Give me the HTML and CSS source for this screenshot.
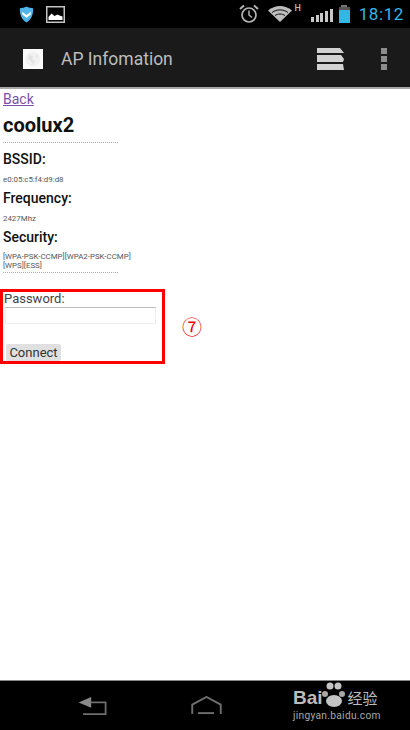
FILE: index.html
```html
<!DOCTYPE html>
<html lang="en">
<head>
<meta charset="utf-8">
<title>AP Infomation</title>
<link rel="stylesheet" href="styles.css">
</head>
<body>
<div class="phone">
  <header class="status">
    <div class="status-left">
      <svg class="ic-shield" viewBox="0 0 14 16"><path d="M7 .5C5 1.500 3 2 .8 2c-.4 5 1.200 10.500 6.200 13.500C12 12.500 13.600 7 13.200 2 11 2 9 1.500 7 .5z" fill="#4fb4ea"/><path d="M3 5.500l4 3 4-3v2.500l-4 3-4-3z" fill="#fff"/></svg>
      <svg class="ic-pic" viewBox="0 0 19 17"><rect x=".75" y=".75" width="17.500" height="15.500" fill="#000" stroke="#c4c4c4" stroke-width="1.500"/><path d="M2.500 14v-3l3-3.500 3 2.500 3-1.500 2 1 3 1V14z" fill="#fff"/></svg>
    </div>
    <div class="status-right">
      <svg class="ic-alarm" viewBox="0 0 20 20"><circle cx="10" cy="11" r="7" fill="none" stroke="#b4b4b4" stroke-width="1.700"/><path d="M10 6.500V11l3 2.500" fill="none" stroke="#b4b4b4" stroke-width="1.500"/><path d="M1 5l4-3.500M19 5l-4-3.500" stroke="#b4b4b4" stroke-width="2"/></svg>
      <div class="wifi">
        <svg class="ic-wifi" viewBox="0 0 24 16"><path d="M0 4.500C7-1.500 17-1.500 24 4.500L12 16z" fill="#bdbdbd"/><path d="M4 6.500c5-3.500 11-3.500 16 0" fill="none" stroke="#111" stroke-width="1"/><path d="M7 9.500c3-2 7-2 10 0" fill="none" stroke="#111" stroke-width="1"/></svg>
        <span class="net">H</span>
      </div>
      <div class="signal"><i class="s1"></i><i class="s2"></i><i class="s3"></i><i class="s4"></i><i class="s5"></i></div>
      <div class="battery"><i class="cap"></i><i class="cell"></i></div>
      <span class="clock">18:12</span>
    </div>
  </header>
  <nav class="actionbar">
    <div class="app-icon"><svg viewBox="0 0 20 20"><circle cx="10" cy="10" r="7.500" fill="#f1f1f1"/><path d="M6 6l4 1-1 3 3 2-2 4-2-4-3-2zM13 5l2 3-2 1z" fill="#e2e2e2"/></svg></div>
    <span class="title">AP Infomation</span>
    <svg class="ic-stack" viewBox="0 0 28 22"><path d="M0 0h23l4 5H0zM0 7h24l3 4-1 3H0zM0 16h26l1 6H0z" fill="#d2d2d2"/></svg>
    <div class="more"><i></i><i></i><i></i></div>
  </nav>
  <main class="content">
    <a class="back" href="#">Back</a>
    <h1 class="ssid">coolux2</h1>
    <div class="rule"></div>
    <h2 class="label first">BSSID:</h2>
    <p class="value">e0:05:c5:f4:d9:d8</p>
    <h2 class="label">Frequency:</h2>
    <p class="value">2427Mhz</p>
    <h2 class="label">Security:</h2>
    <p class="value wrap">[WPA-PSK-CCMP][WPA2-PSK-CCMP]<br>[WPS][ESS]</p>
    <div class="rule rule-end"></div>
    <div class="form-row">
      <form class="form">
        <label class="pw-label" for="pw">Password:</label>
        <input class="pw" id="pw" type="text">
        <button class="connect" type="button">Connect</button>
      </form>
      <span class="mark">⑦</span>
    </div>
  </main>
  <footer class="navbar">
    <svg class="ic-back" viewBox="0 0 32 20"><path d="M0 6L14 0v12z" fill="#8a8a8a"/><path d="M13 6h17v13H5" fill="none" stroke="#6e6e6e" stroke-width="2"/></svg>
    <svg class="ic-home" viewBox="0 0 32 20"><path d="M1 19V9L16 1l15 8v10" fill="none" stroke="#6e6e6e" stroke-width="2"/><path d="M7 18h17" stroke="#6e6e6e" stroke-width="2"/></svg>
    <div class="wm">
      <div class="wm-top"><span class="wm-bai">Bai</span><svg class="wm-paw" viewBox="0 0 24 26"><circle cx="4" cy="13" r="3" fill="#a8a8a8"/><circle cx="9" cy="5" r="3.500" fill="#c4c4c4"/><circle cx="17" cy="5" r="3.500" fill="#c4c4c4"/><circle cx="21" cy="13" r="3" fill="#a8a8a8"/><ellipse cx="13" cy="20" rx="8" ry="6" fill="#c4c4c4"/></svg><span class="wm-du">经验</span></div>
      <div class="wm-url">jingyan.baidu.com</div>
    </div>
  </footer>
</div>
</body>
</html>
```
FILE: styles.css
```css
* { box-sizing: border-box; }
html, body { margin: 0; padding: 0; }
body { font-family: Roboto, "Noto Sans", sans-serif; background: #fff; }
.phone { width: 410px; height: 730px; display: flex; flex-direction: column; overflow: hidden; }

.status { height: 28px; flex: none; background: #000; display: flex; justify-content: space-between; align-items: center; padding: 0 6px 0 19px; }
.status-left { display: flex; align-items: center; gap: 12px; }
.ic-shield { width: 15px; height: 17px; display: block; }
.ic-pic { width: 19px; height: 17px; display: block; }
.status-right { display: flex; align-items: center; }
.ic-alarm { width: 20px; height: 20px; display: block; }
.wifi { display: flex; align-items: flex-start; margin-left: 9px; height: 20px; }
.ic-wifi { width: 24px; height: 16px; margin-top: 2px; display: block; }
.net { color: #bbb; font-size: 9px; font-weight: 500; line-height: 8px; margin-left: 3px; }
.signal { display: flex; align-items: flex-end; gap: 1.700px; height: 14px; margin-left: 10px; margin-top: 2px; }
.signal i { width: 3px; background: #c8c8c8; display: block; }
.s1 { height: 5px; } .s2 { height: 7px; } .s3 { height: 9px; } .s4 { height: 11px; } .s5 { height: 13px; }
.battery { display: flex; flex-direction: column; align-items: center; margin-left: 6px; }
.cap { width: 6px; height: 2px; background: #777; display: block; }
.cell { width: 11px; height: 16px; display: block; background: #33b5e5; border-top: 3px solid #555; }
.clock { color: #33b5e5; font-size: 17px; letter-spacing: .6px; margin-left: 9px; line-height: 20px; }

.actionbar { height: 59px; flex: none; background: #1a1a1a; display: flex; align-items: center; padding: 2px 0 0 23px; }
.app-icon { width: 20px; height: 20px; background: #fafafa; flex: none; }
.app-icon svg { display: block; width: 20px; height: 20px; }
.title { color: #bdbdbd; font-size: 17.500px; margin-left: 18px; flex: 1; }
.ic-stack { width: 28px; height: 22px; display: block; margin-right: 36px; }
.more { display: flex; flex-direction: column; gap: 2px; margin-right: 23px; }
.more i { width: 6px; height: 6px; background: #8c8c8c; display: block; }

.content { flex: 1; background: #fff; border-top: 2px solid #a8a8a8; padding: 2px 0 0 3px; color: #111; }
.back { display: block; color: #7a4fa8; font-size: 14px; line-height: 17px; }
.ssid { font-size: 20px; font-weight: 700; line-height: 24px; margin: 5px 0 0; }
.rule { width: 115px; border-top: 1px dotted #aaa; margin-top: 5px; }
.label { font-size: 14px; font-weight: 500; line-height: 17px; margin: 6px 0 0; }
.label.first { margin-top: 8px; }
.value { font-size: 7.900px; line-height: 9px; margin: 7px 0 0; color: #555; }
.wrap { margin-top: 6px; }
.rule-end { margin-top: 2px; }

.form-row { display: flex; align-items: center; margin: 15.500px 0 0 -3px; }
.form { width: 165px; height: 75px; border: 3px solid #f00; padding: 0 0 0 1px; display: flex; flex-direction: column; align-items: flex-start; }
.pw-label { color: #444; font-size: 13px; line-height: 14px; }
.pw { width: 151px; height: 17px; margin: 1px 0 0 1px; border: 1px solid #eee; border-top: 1px solid #bbb; background: #fff; padding: 0; }
.connect { margin: 20px 0 0 2px; height: 20px; width: 55px; padding: 0; border: 0; background: #e0e0e0; border-radius: 2px; color: #333; font: 13px Roboto, sans-serif; }
.mark { color: #e00; font: 20px "Noto Sans CJK SC", sans-serif; margin-left: 17px; }

.navbar { height: 50px; flex: none; background: #000; border-top: 1px solid #888; display: flex; align-items: center; position: relative; padding: 0 0 0 78px; }
.ic-back { width: 30px; height: 18px; display: block; }
.ic-home { width: 31px; height: 19px; display: block; margin-left: 83px; }
.wm { position: absolute; left: 293px; top: 4px; color: #bcbcbc; }
.wm-top { display: flex; align-items: center; height: 25px; }
.wm-bai { font: 700 19px "Liberation Sans", sans-serif; color: #bcbcbc; }
.wm-paw { width: 24px; height: 26px; margin: -8px 3px 0 -2px; display: block; }
.wm-du { font: 15px "Noto Sans CJK SC", sans-serif; }
.wm-url { font: 10.200px Roboto, sans-serif; letter-spacing: .3px; color: #a8a8a8; }
```
